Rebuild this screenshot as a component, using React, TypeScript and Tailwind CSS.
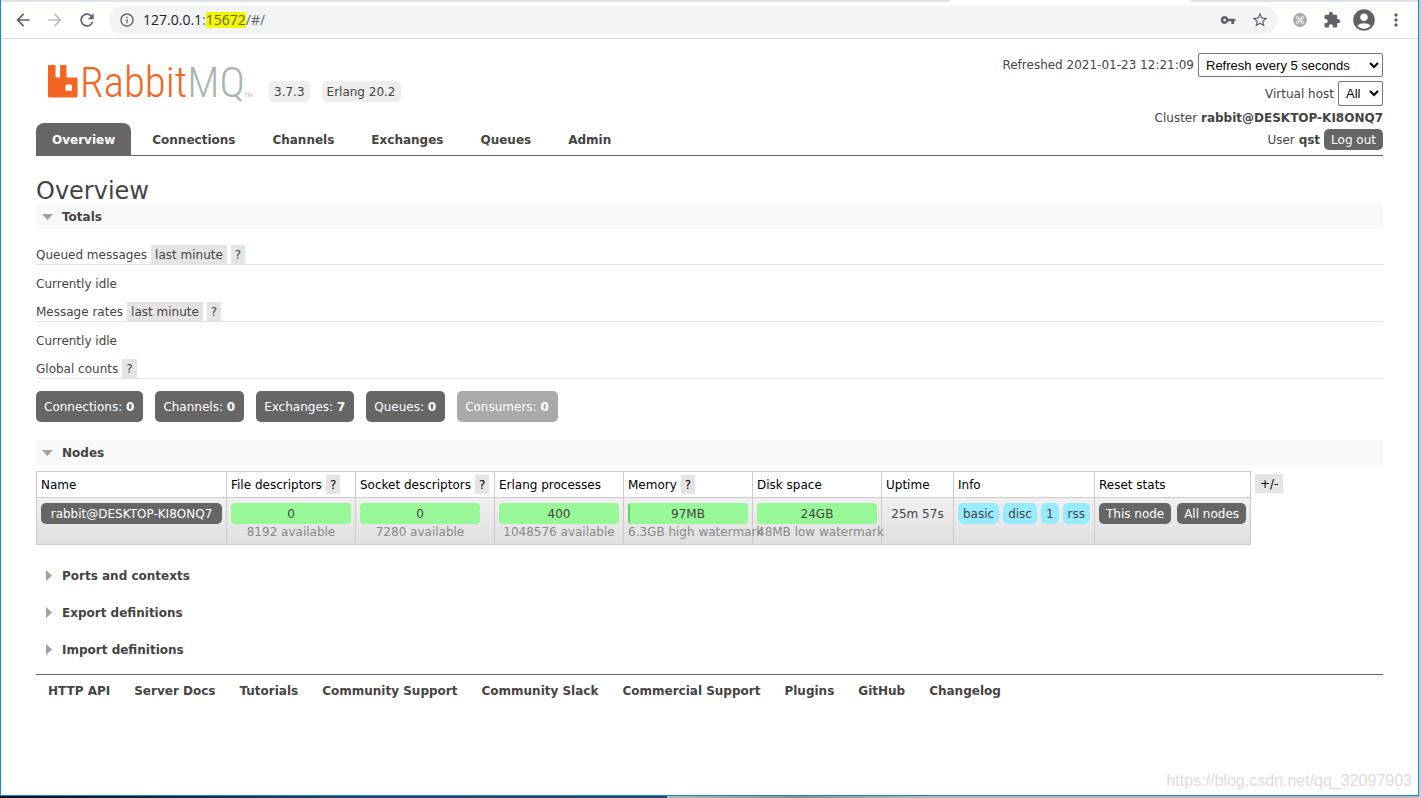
import type { ReactNode } from 'react';
import {
  MdArrowBack,
  MdArrowForward,
  MdRefresh,
  MdInfoOutline,
  MdVpnKey,
  MdStarBorder,
  MdExtension,
  MdAccountCircle,
  MdMoreVert,
} from 'react-icons/md';
import { Command } from 'lucide-react';

const tabs = ['Overview', 'Connections', 'Channels', 'Exchanges', 'Queues', 'Admin'];

const footerLinks = [
  'HTTP API',
  'Server Docs',
  'Tutorials',
  'Community Support',
  'Community Slack',
  'Commercial Support',
  'Plugins',
  'GitHub',
  'Changelog',
];

const counts = [
  { label: 'Connections', value: 0 },
  { label: 'Channels', value: 0 },
  { label: 'Exchanges', value: 7 },
  { label: 'Queues', value: 0 },
  { label: 'Consumers', value: 0, disabled: true },
];

const columns = [
  { title: 'Name', width: 'w-[190px]' },
  { title: 'File descriptors', width: 'w-[129px]', help: true },
  { title: 'Socket descriptors', width: 'w-[139px]', help: true },
  { title: 'Erlang processes', width: 'w-[129px]' },
  { title: 'Memory', width: 'w-[129px]', help: true },
  { title: 'Disk space', width: 'w-[129px]' },
  { title: 'Uptime', width: 'w-[72px]' },
  { title: 'Info', width: 'w-[141px]' },
  { title: 'Reset stats', width: 'w-[156px]' },
];

const gauges = [
  { value: '0', note: '8192 available', used: 0 },
  { value: '0', note: '7280 available', used: 0 },
  { value: '400', note: '1048576 available', used: 0 },
  { value: '97MB', note: '6.3GB high watermark', used: 1.5 },
  { value: '24GB', note: '48MB low watermark', used: 0 },
];

const cell = 'border border-[#ccc] px-1 text-left align-top font-normal';
const pill = 'rounded-[5px] pt-px leading-5 whitespace-nowrap';
const select =
  "rounded-xs border border-[#767676] bg-white px-[3px] font-['Liberation_Sans',sans-serif] text-[13px] leading-5 text-black";

function Toolbar() {
  return (
    <div>
      <div className="flex h-0.5">
        <div className="w-[67%] rounded-br-sm bg-[#dee1e6]" />
        <div className="w-[17%]" />
        <div className="flex-1 rounded-bl-sm bg-[#dee1e6]" />
      </div>
      <div className="flex h-[37px] items-center border-b border-[#dadce0] pr-1.5 pl-3 text-[#5f6368]">
        <button aria-label="Back"><MdArrowBack className="h-5 w-5" /></button>
        <button aria-label="Forward" className="ml-3 text-[#babcbe]"><MdArrowForward className="h-5 w-5" /></button>
        <button aria-label="Reload" className="ml-3"><MdRefresh className="h-5 w-5" /></button>
        <div className="ml-3 flex h-7 flex-1 items-center rounded-full bg-[#f1f3f4] pr-0.5 pl-2.5">
          <MdInfoOutline className="h-4 w-4" />
          <div className="ml-2 flex flex-1 font-['Open_Sans',sans-serif] text-sm leading-4">
            <span className="text-[#202124]">127.0.0.1</span>
            <span>:</span>
            <span className="bg-[#f5f500] text-[#66691f]">15672</span>
            <span>/#/</span>
          </div>
          <button aria-label="Passwords" className="flex w-8 justify-center"><MdVpnKey className="h-4 w-4" /></button>
          <button aria-label="Bookmark" className="flex w-8 justify-center"><MdStarBorder className="h-[18px] w-[18px]" /></button>
        </div>
        <button aria-label="Shortcut extension" className="ml-1.5 flex w-8 justify-center">
          <span className="flex h-3.5 w-3.5 items-center justify-center rounded-full bg-[#aaa] text-white">
            <Command className="h-2.5 w-2.5" />
          </span>
        </button>
        <button aria-label="Extensions" className="flex w-8 justify-center"><MdExtension className="h-[18px] w-[18px]" /></button>
        <button aria-label="Profile" className="flex w-8 justify-center"><MdAccountCircle className="h-[26px] w-[26px]" /></button>
        <button aria-label="Menu" className="flex w-8 justify-center"><MdMoreVert className="h-5 w-5" /></button>
      </div>
    </div>
  );
}

function Logo() {
  return (
    <svg width="206" height="54" viewBox="0 0 206 54" className="overflow-visible" role="img" aria-label="RabbitMQ">
      <path
        fill="#f26522"
        fillRule="evenodd"
        d="M1 17h5.500a1 1 0 0 1 1 1v10.500a1 1 0 0 0 1 1h2.600a1 1 0 0 0 1-1V18a1 1 0 0 1 1-1h4.400a1 1 0 0 1 1 1v10.500a1 1 0 0 0 1 1H28.500a1 1 0 0 1 1 1V48.500a1 1 0 0 1-1 1H1a1 1 0 0 1-1-1V18a1 1 0 0 1 1-1zM19 36.500a1.500 1.500 0 0 0-1.500 1.500v3.500a1.500 1.500 0 0 0 1.500 1.500h3.500a1.500 1.500 0 0 0 1.500-1.500V38a1.500 1.500 0 0 0-1.500-1.500z"
      />
      <text x="32" y="49" fontSize="43" fill="#f26522" className="font-['Roboto_Condensed',sans-serif] font-light">
        Rabbit<tspan fill="#a8b5ae">MQ</tspan>
      </text>
      <text x="196" y="49" fontSize="6" fill="#a8b5ae" className="font-['Liberation_Sans',sans-serif]">TM</text>
    </svg>
  );
}

function Header() {
  return (
    <header className="flex justify-between border-b border-[#666]">
      <div>
        <div className="flex h-[63px] items-end pl-3">
          <Logo />
          <span className="ml-[15px] rounded-[5px] bg-[#eee] px-[5px] pt-px leading-5">3.7.3</span>
          <span className="ml-3 rounded-[5px] bg-[#eee] px-[5px] pt-px leading-5">Erlang 20.2</span>
        </div>
        <nav className="mt-[21px] flex gap-[5px] font-bold">
          {tabs.map((tab, i) => (
            <a
              key={tab}
              href="#"
              className={`rounded-t-lg px-4 pt-0.5 leading-[30px] ${i === 0 ? 'bg-[#666] text-white' : ''}`}
            >
              {tab}
            </a>
          ))}
        </nav>
      </div>
      <div className="flex flex-col items-end pt-3.5">
        <div className="flex items-center gap-1">
          <label htmlFor="refresh">Refreshed 2021-01-23 12:21:09</label>
          <select id="refresh" className={`${select} h-6 w-[185px]`}>
            <option>Refresh every 5 seconds</option>
          </select>
        </div>
        <div className="mt-1 flex items-center gap-1">
          <label htmlFor="vhost">Virtual host</label>
          <select id="vhost" className={`${select} h-[25px] w-[45px]`}>
            <option>All</option>
          </select>
        </div>
        <p className="pt-px leading-[22px]">Cluster <b>rabbit@DESKTOP-KI8ONQ7</b></p>
        <div className="flex items-center gap-1">
          <span>User <b>qst</b></span>
          <button className={`${pill} bg-[#666] px-[7px] text-white`}>Log out</button>
        </div>
      </div>
    </header>
  );
}

function SectionTitle({ children }: { children: ReactNode }) {
  return (
    <h2 className="flex h-[25px] items-center gap-2 bg-[#f8f8f8] pl-1.5 font-bold">
      <svg width="12" height="6" viewBox="0 0 12 6"><path d="M0 0h11L5.500 6z" fill="#a0a0a0" /></svg>
      {children}
    </h2>
  );
}

function Tag({ children }: { children: ReactNode }) {
  return <button className="bg-[#e4e4e4] px-1 pt-px leading-[18px]">{children}</button>;
}

function Stat({ title, range }: { title: string; range?: boolean }) {
  return (
    <h3 className="flex gap-1 border-b border-[#e4e4e4]">
      <span className="pt-px leading-[18px]">{title}</span>
      {range && <Tag>last minute</Tag>}
      <Tag>?</Tag>
    </h3>
  );
}

function NodesTable() {
  return (
    <div className="mt-1.5 flex items-start gap-1">
      <table className="table-fixed border-collapse">
        <thead>
          <tr className="h-[26px] text-black">
            {columns.map((col) => (
              <th key={col.title} className={`${cell} ${col.width}`}>
                <div className="flex gap-1 pt-[3px] whitespace-nowrap">
                  <span className="pt-px leading-[18px]">{col.title}</span>
                  {col.help && <Tag>?</Tag>}
                </div>
              </th>
            ))}
          </tr>
        </thead>
        <tbody>
          <tr className="h-[47px] bg-linear-to-b from-[#f0f0f0] to-[#dfdfdf]">
            <td className={`${cell} pt-[5px]`}>
              <a href="#" className={`${pill} block bg-[#666] text-center text-white`}>
                rabbit@DESKTOP-KI8ONQ7
              </a>
            </td>
            {gauges.map((g) => (
              <td key={g.note} className={`${cell} pt-[5px]`}>
                <div className="w-[120px]">
                  <div className="overflow-hidden rounded-[4px] bg-[#98f898]">
                    <div className="h-[21px] bg-[#5fd65f]" style={{ width: `${g.used}%` }} />
                    <div className="-mt-5 text-center leading-5">{g.value}</div>
                  </div>
                  <div className="flex justify-center-safe leading-4 whitespace-nowrap text-[#888]">{g.note}</div>
                </div>
              </td>
            ))}
            <td className={`${cell} pt-[5px]`}>
              <div className={`${pill} text-center`}>25m 57s</div>
            </td>
            <td className={`${cell} pt-[5px]`}>
              <div className="flex justify-between">
                {['basic', 'disc', '1', 'rss'].map((t) => (
                  <span key={t} className={`${pill} bg-[#98ebff] px-[5px]`}>{t}</span>
                ))}
              </div>
            </td>
            <td className={`${cell} pt-[5px]`}>
              <div className="flex gap-1.5 text-white">
                <button className={`${pill} flex-auto bg-[#666]`}>This node</button>
                <button className={`${pill} flex-auto bg-[#666]`}>All nodes</button>
              </div>
            </td>
          </tr>
        </tbody>
      </table>
      <button className="mt-[3px] bg-[#e4e4e4] px-[5px] pt-px leading-[18px] text-black">+/-</button>
    </div>
  );
}

export default function App() {
  return (
    <div className="flex min-h-screen flex-col bg-[#ccc] pr-0.5 font-['DejaVu_Sans',sans-serif] text-xs text-[#444]">
      <div className="relative flex flex-1 flex-col border-x border-b border-[#1883d7] bg-white">
        <Toolbar />
        <div className="px-[35px]">
          <Header />
          <h1 className="pt-[22px] text-2xl leading-[26px]">Overview</h1>
          <SectionTitle>Totals</SectionTitle>
          <div className="pt-4">
            <Stat title="Queued messages" range />
            <p className="flex h-[37px] items-center pt-px">Currently idle</p>
            <Stat title="Message rates" range />
            <p className="flex h-[37px] items-center pt-px">Currently idle</p>
            <Stat title="Global counts" />
          </div>
          <div className="mt-3 mb-[18px] flex gap-3">
            {counts.map((c) => (
              <a
                key={c.label}
                href="#"
                className={`rounded-[5px] pt-px pr-[9px] pl-2 leading-[30px] text-white ${c.disabled ? 'bg-[#aaa]' : 'bg-[#666]'}`}
              >
                {c.label}: <b>{c.value}</b>
              </a>
            ))}
          </div>
          <SectionTitle>Nodes</SectionTitle>
          <NodesTable />
          <div className="mt-3 font-bold">
            {['Ports and contexts', 'Export definitions', 'Import definitions'].map((title) => (
              <h2 key={title} className="flex h-[37px] items-center gap-2.5 pl-2.5">
                <svg width="6" height="12" viewBox="0 0 6 12"><path d="M0 0v11L6 5.500z" fill="#a0a0a0" /></svg>
                {title}
              </h2>
            ))}
          </div>
          <footer className="mt-1.5 flex gap-6 border-t border-[#666] pt-2 pl-3 font-bold">
            {footerLinks.map((link) => (
              <a key={link} href="#">{link}</a>
            ))}
          </footer>
        </div>
        <span className="absolute right-1.5 bottom-1 font-['Liberation_Sans',sans-serif] text-base leading-5 text-[#dcdcdc]">
          https://blog.csdn.net/qq_32097903
        </span>
      </div>
      <div className="flex h-0.5">
        <div className="w-[47%] bg-linear-to-r from-[#0a0f1c] via-[#1d4468] to-[#2a4a6c]" />
        <div className="w-[18%] bg-linear-to-r from-[#b4b8b4] via-[#8c908c] to-[#b4b8b4]" />
        <div className="flex-1 bg-[#b8b8b8]" />
      </div>
    </div>
  );
}
